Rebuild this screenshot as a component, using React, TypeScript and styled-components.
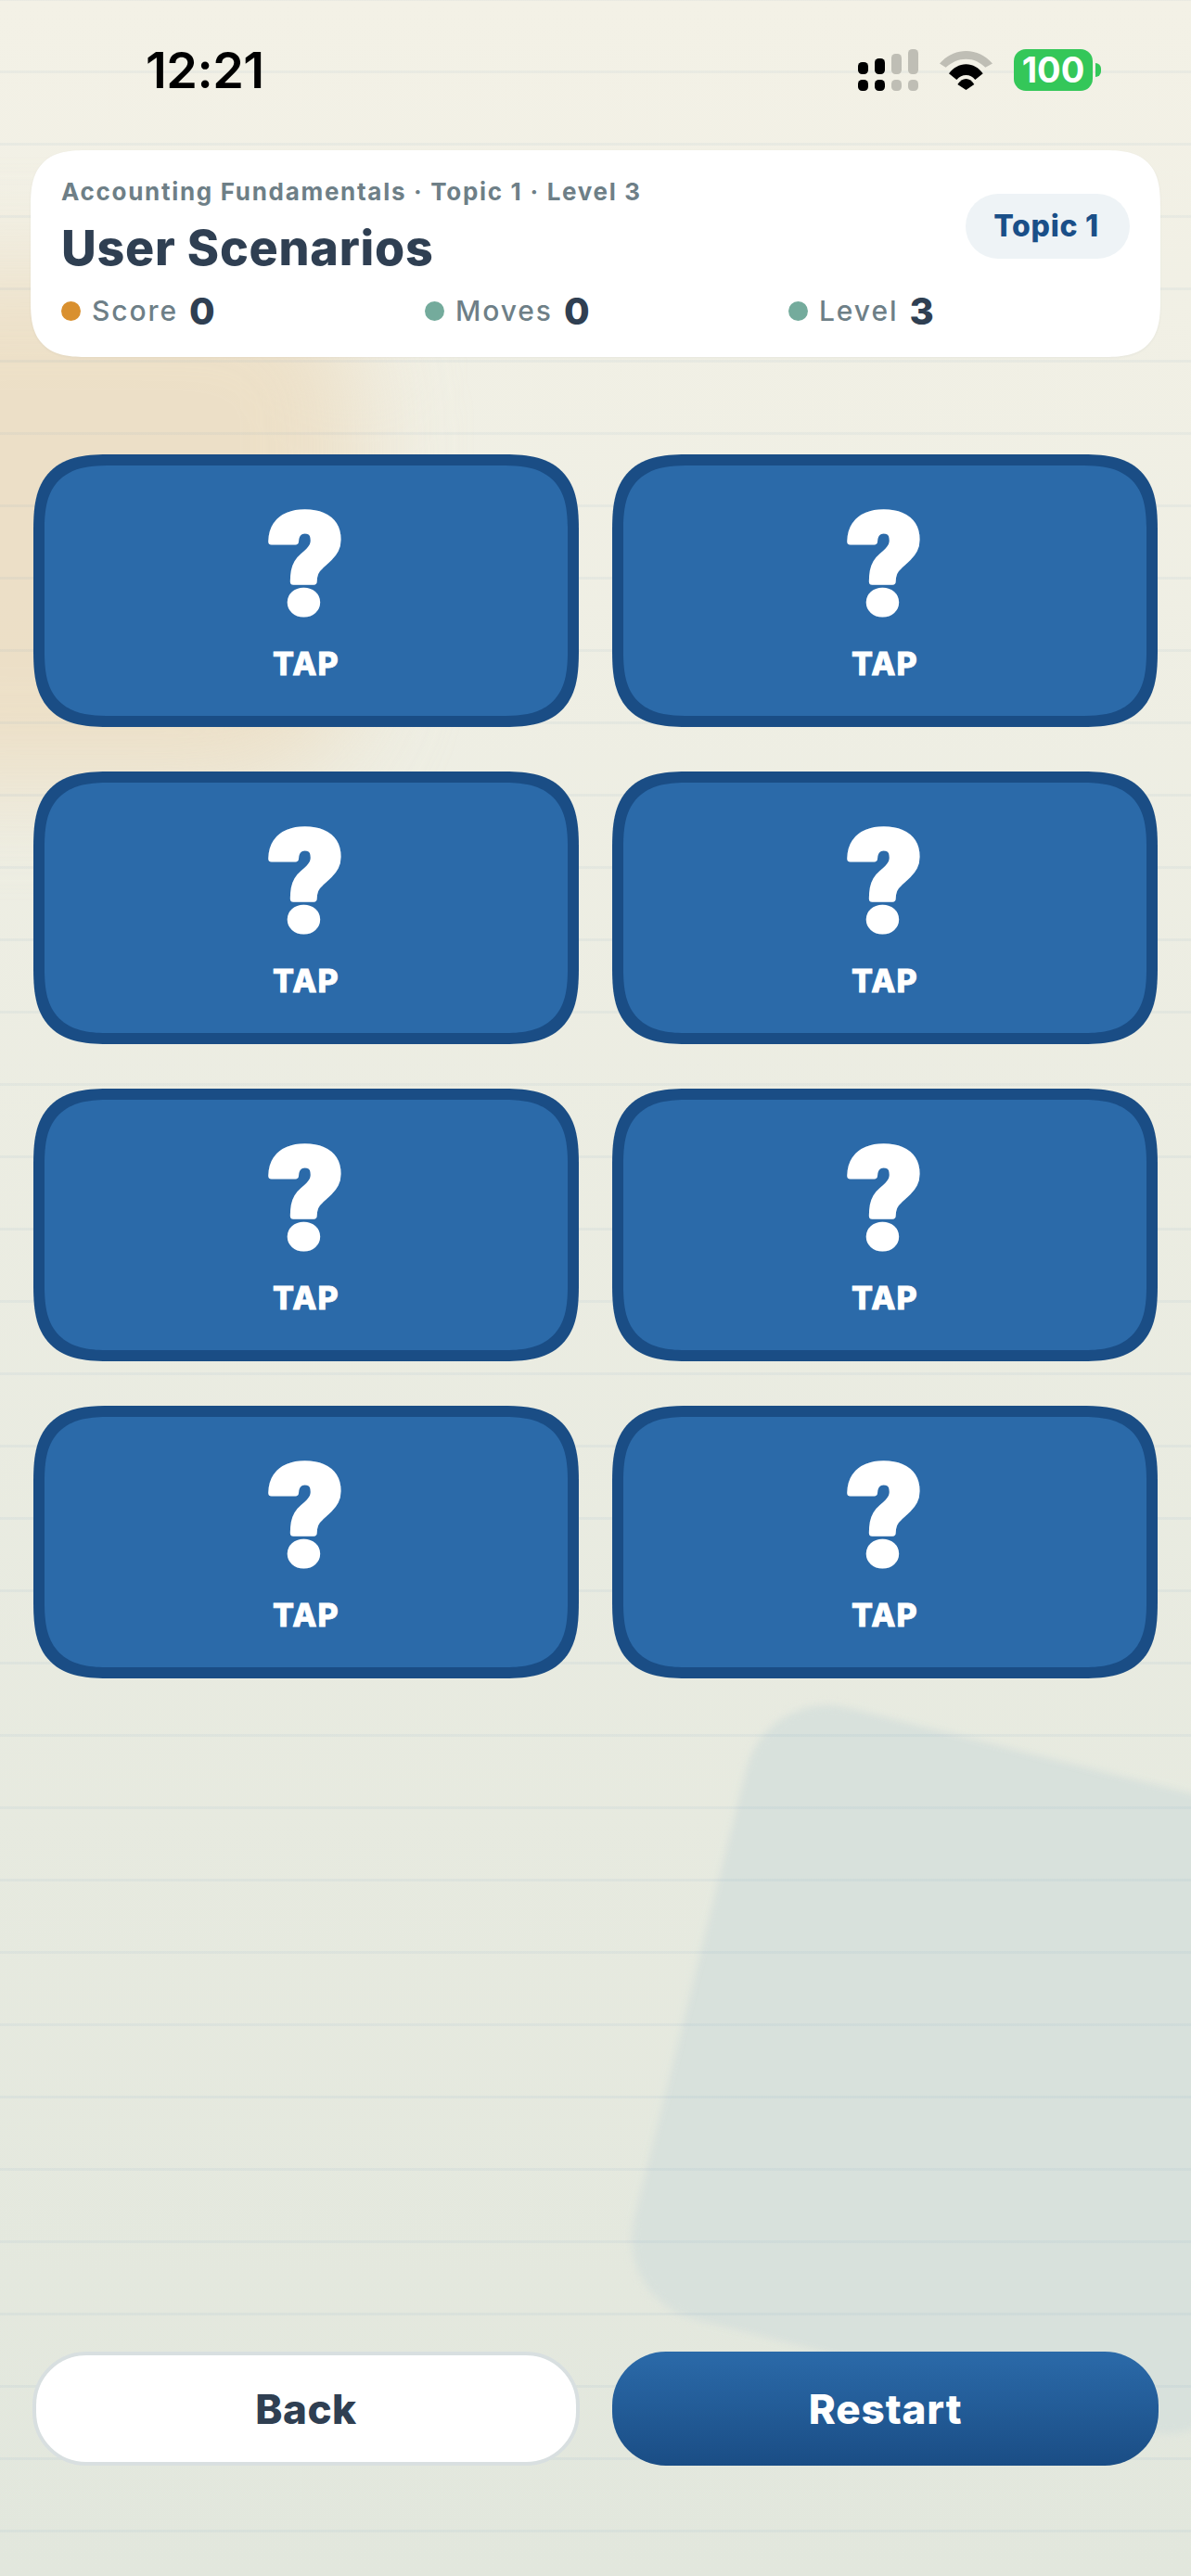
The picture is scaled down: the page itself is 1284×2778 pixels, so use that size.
import styled, { createGlobalStyle } from "styled-components";

const GlobalStyle = createGlobalStyle`
  * {
    box-sizing: border-box;
  }
  html,
  body {
    margin: 0;
    padding: 0;
  }
  body {
    font-family: Inter, "Liberation Sans", sans-serif;
    -webkit-font-smoothing: antialiased;
  }
`;

const Page = styled.div`
  position: relative;
  width: 1284px;
  height: 2778px;
  overflow: hidden;
  display: flex;
  flex-direction: column;
  background: linear-gradient(180deg, #f3f1e6 0%, #e2e7dd 100%);
`;

const WarmGlow = styled.div`
  position: absolute;
  left: -230px;
  top: 290px;
  width: 620px;
  height: 560px;
  border-radius: 140px;
  background: #ecdcc0;
  opacity: 0.8;
  filter: blur(55px);
`;

const CoolTile = styled.div`
  position: absolute;
  left: 734px;
  top: 1892px;
  width: 680px;
  height: 680px;
  border-radius: 90px;
  background: #d8e1dc;
  transform: rotate(14deg);
  filter: blur(4px);
`;

const RuledLines = styled.div`
  position: absolute;
  inset: 0;
  background-image: linear-gradient(
    rgba(44, 107, 168, 0.05) 0,
    rgba(44, 107, 168, 0.05) 3px,
    transparent 3px
  );
  background-size: 100% 78px;
  background-position: 0 -2px;
`;

const Content = styled.div`
  position: relative;
  flex: 1;
  display: flex;
  flex-direction: column;
`;

const StatusBar = styled.div`
  height: 45px;
  margin-top: 53px;
  margin-bottom: 64px;
  padding: 0 97px 0 157px;
  display: flex;
  align-items: center;
  justify-content: space-between;
`;

const Clock = styled.span`
  font-size: 54px;
  font-weight: 600;
  letter-spacing: -0.5px;
  line-height: 45px;
  color: #000;
`;

const StatusIcons = styled.div`
  display: flex;
  align-items: center;
  gap: 23px;
`;

const Battery = styled.div`
  display: flex;
  align-items: center;
  gap: 3px;
`;

const BatteryBody = styled.div`
  width: 85px;
  height: 45px;
  border-radius: 13px;
  background: #34c759;
  color: #fff;
  font-size: 38px;
  font-weight: 700;
  line-height: 45px;
  text-align: center;
`;

const BatteryCap = styled.div`
  width: 6px;
  height: 15px;
  border-radius: 0 8px 8px 0;
  background: #34c759;
`;

const HeaderCard = styled.header`
  margin: 0 33px;
  height: 223px;
  padding: 30px 33px 0;
  border-radius: 62px;
  corner-shape: superellipse(1.5);
  background: #fff;
  box-shadow: 0 1px 3px rgba(44, 62, 80, 0.05);
`;

const HeaderTop = styled.div`
  display: flex;
  align-items: center;
  justify-content: space-between;
`;

const Eyebrow = styled.div`
  font-size: 26px;
  font-weight: 700;
  letter-spacing: 1.7px;
  line-height: 30px;
  color: #6e7f87;
`;

const Title = styled.h1`
  margin: 16px 0 0;
  font-size: 52px;
  font-weight: 800;
  letter-spacing: 0.75px;
  line-height: 60px;
  color: #2f3f52;
`;

const TopicPill = styled.div`
  width: 177px;
  height: 70px;
  margin-bottom: 3px;
  padding-right: 3px;
  border-radius: 35px;
  background: #eef3f6;
  color: #1a4f88;
  font-size: 32px;
  font-weight: 800;
  letter-spacing: 0.7px;
  line-height: 70px;
  text-align: center;
`;

const Stats = styled.div`
  margin-top: 17px;
  display: grid;
  grid-template-columns: repeat(3, 1fr);
  column-gap: 24px;
`;

const Stat = styled.div`
  display: flex;
  align-items: center;
  height: 40px;
`;

const StatDot = styled.span<{ $color: string }>`
  width: 21px;
  height: 21px;
  border-radius: 50%;
  background: ${(props) => props.$color};
`;

const StatLabel = styled.span`
  margin-left: 12px;
  font-size: 30px;
  font-weight: 500;
  letter-spacing: 1.9px;
  color: #6e7f87;
`;

const StatValue = styled.span`
  margin-left: 12px;
  font-size: 40px;
  font-weight: 800;
  color: #2f3f52;
`;

const Board = styled.div`
  margin-top: 105px;
  padding: 0 36px;
  display: grid;
  grid-template-columns: repeat(2, 588px);
  grid-auto-rows: 294px;
  gap: 48px 36px;
`;

const Tile = styled.button`
  padding: 3px 0 0;
  border: 12px solid #1a4d85;
  border-radius: 84px;
  corner-shape: superellipse(1.5);
  background: #2b6aa9;
  color: #fff;
  font-family: inherit;
  display: flex;
  flex-direction: column;
  align-items: center;
  justify-content: center;
`;

// Tall box so the whole line of text fits; the margins take the spare room back
const TileMarkBox = styled.svg`
  display: block;
  margin: -46px 0 -33px;
`;

// The stroke with round joins gives the glyph its soft, rounded ends
const TileMarkGlyph = styled.text`
  font-family: Roboto, Inter, sans-serif;
  font-size: 150px;
  font-weight: 900;
  fill: #fff;
  stroke: #fff;
  stroke-width: 7px;
  stroke-linejoin: round;
  text-anchor: middle;
`;

const TileLabel = styled.span`
  margin-top: 33px;
  font-size: 34px;
  font-weight: 800;
  letter-spacing: 1.3px;
  line-height: 30px;
  -webkit-text-stroke: 0.8px #fff;
`;

const Footer = styled.div`
  margin-top: auto;
  margin-bottom: 119px;
  padding: 0 35px;
  display: grid;
  grid-template-columns: 590px 589px;
  column-gap: 35px;
`;

const FooterButton = styled.button<{ $primary?: boolean }>`
  height: 123px;
  border-radius: 58px;
  border: 4px solid ${(props) => (props.$primary ? "transparent" : "#d8dfe0")};
  background: ${(props) =>
    props.$primary
      ? "linear-gradient(180deg, #2b6aa9 0%, #1a4d85 100%) border-box"
      : "#fff"};
  color: ${(props) => (props.$primary ? "#fff" : "#2f3f52")};
  font-family: inherit;
  font-size: 44px;
  font-weight: 800;
  letter-spacing: ${(props) => (props.$primary ? "0.9px" : "0.5px")};
`;

// Cell bars: the first two are lit, the last two are dimmed
const signalBars = [
  { x: 0, top: 14, fill: "#000" },
  { x: 18, top: 10, fill: "#000" },
  { x: 36, top: 5, fill: "#bfbeb5" },
  { x: 54, top: 0, fill: "#bfbeb5" },
];

function SignalIcon() {
  return (
    <svg width="65" height="45" viewBox="0 0 65 45">
      {signalBars.map((bar) => (
        <g key={bar.x} fill={bar.fill}>
          <rect x={bar.x} y={bar.top} width="11" height={27 - bar.top} rx="4.5" />
          <rect x={bar.x} y="33" width="11" height="12" rx="4.5" />
        </g>
      ))}
    </svg>
  );
}

function WifiIcon() {
  return (
    <svg width="57" height="42" viewBox="0 0 57 42">
      <path
        d="M0 13.500C7.500 5 17.500 0 28.500 0S49.500 5 57 13.500L49.300 17.700C43.500 12 36.500 8.700 28.500 8.700S13 12 6.700 17.700Z"
        fill="#bfbeb5"
      />
      <path
        d="M10 24.300C15 18 21 14.300 28.500 14.300S42 18 46.700 24.300L38.300 31C35.500 27.800 32.500 26 28.500 26S21.500 27.800 18.300 31Z"
        fill="#000"
      />
      <path d="M19.300 36C22 32 25 30 28.500 30S35 32 37.300 36L28.500 42Z" fill="#000" />
    </svg>
  );
}

function TileMark() {
  return (
    <TileMarkBox width="140" height="200" viewBox="0 0 140 200">
      <TileMarkGlyph transform="translate(70 160) scale(1.03 1)">?</TileMarkGlyph>
    </TileMarkBox>
  );
}

const stats = [
  { label: "Score", value: 0, color: "#d9902f" },
  { label: "Moves", value: 0, color: "#74ab9c" },
  { label: "Level", value: 3, color: "#74ab9c" },
];

const tiles = Array.from({ length: 8 }, (_, index) => index);

export default function App() {
  return (
    <Page>
      <GlobalStyle />
      <WarmGlow />
      <CoolTile />
      <RuledLines />
      <Content>
        <StatusBar>
          <Clock>12:21</Clock>
          <StatusIcons>
            <SignalIcon />
            <WifiIcon />
            <Battery>
              <BatteryBody>100</BatteryBody>
              <BatteryCap />
            </Battery>
          </StatusIcons>
        </StatusBar>

        <HeaderCard>
          <HeaderTop>
            <div>
              <Eyebrow>Accounting Fundamentals · Topic 1 · Level 3</Eyebrow>
              <Title>User Scenarios</Title>
            </div>
            <TopicPill>Topic 1</TopicPill>
          </HeaderTop>
          <Stats>
            {stats.map((stat) => (
              <Stat key={stat.label}>
                <StatDot $color={stat.color} />
                <StatLabel>{stat.label}</StatLabel>
                <StatValue>{stat.value}</StatValue>
              </Stat>
            ))}
          </Stats>
        </HeaderCard>

        <Board>
          {tiles.map((tile) => (
            <Tile key={tile} type="button">
              <TileMark />
              <TileLabel>TAP</TileLabel>
            </Tile>
          ))}
        </Board>

        <Footer>
          <FooterButton type="button">Back</FooterButton>
          <FooterButton type="button" $primary>
            Restart
          </FooterButton>
        </Footer>
      </Content>
    </Page>
  );
}
